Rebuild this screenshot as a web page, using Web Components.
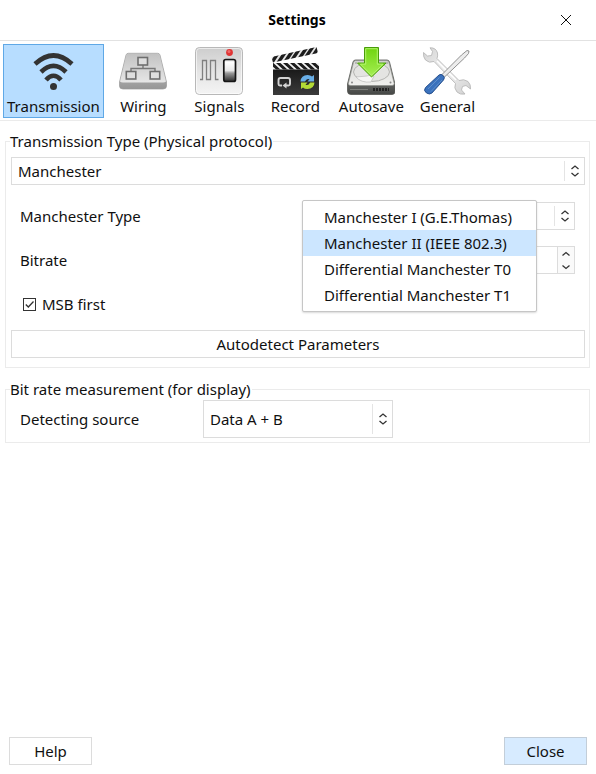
<!DOCTYPE html>
<html lang="en">
<head>
<meta charset="utf-8">
<title>Settings</title>
<style>
  body {
    margin: 0;
    background: #fff;
    color: #101010;
    font: 15px/22px "Noto Sans", "Open Sans", sans-serif;
  }
</style>
</head>
<body>
<settings-window></settings-window>

<script>
(function main() {
  const ICONS = {
    transmission: `
      <g fill="none" stroke="#333" stroke-width="4.600">
        <path d="M6 17Q24.500 0 43 17"/>
        <path d="M12 25Q24.500 12.500 37 25"/>
        <path d="M17 33Q24.500 24.500 32 33"/>
      </g>
      <circle cx="24.500" cy="39.500" r="3.500" fill="#333"/>`,
    wiring: `
      <defs>
        <linearGradient id="w1" x1="0" y1="0" x2="0" y2="1"><stop offset="0" stop-color="#c2c2c2"/><stop offset="1" stop-color="#e6e6e6"/></linearGradient>
        <linearGradient id="w2" x1="0" y1="0" x2="0" y2="1"><stop offset="0" stop-color="#d0d0d0"/><stop offset="1" stop-color="#969696"/></linearGradient>
      </defs>
      <path d="M0.500 35L7 8Q7.500 6.300 9.500 6.300H38.500Q40.500 6.300 41 8L47.500 35V39Q47.500 42 44 42H4Q0.500 42 0.500 39Z" fill="url(#w2)" stroke="#9a9a9a" stroke-width=".7"/>
      <path d="M1 34.500L7.400 8.300Q7.800 6.800 9.500 6.800H38.500Q40.200 6.800 40.600 8.300L47 34.500Q46 35.500 44 35.500H4Q2 35.500 1 34.500Z" fill="url(#w1)"/>
      <path d="M24 18V21.500M12 24.500V21.500H36V24.500" fill="none" stroke="#777" stroke-width="1.400"/>
      <g fill="#dedede" stroke="#6e6e6e" stroke-width="1.600">
        <rect x="19" y="10.500" width="9.500" height="7.500"/>
        <rect x="7.300" y="24.500" width="9.500" height="7.500"/>
        <rect x="31.200" y="24.500" width="9.500" height="7.500"/>
      </g>`,
    signals: `
      <defs>
        <linearGradient id="s1" x1="0" y1="0" x2="0" y2="1"><stop offset="0" stop-color="#cdcdcd"/><stop offset=".5" stop-color="#e4e4e4"/><stop offset="1" stop-color="#f4f4f4"/></linearGradient>
        <linearGradient id="s2" x1="0" y1="0" x2="0" y2="1"><stop offset="0" stop-color="#ccc"/><stop offset=".12" stop-color="#fff"/><stop offset=".5" stop-color="#e8e8e8"/><stop offset=".62" stop-color="#999"/><stop offset="1" stop-color="#2c2c2c"/></linearGradient>
      </defs>
      <rect x=".5" y=".5" width="47" height="47" rx="4" fill="url(#s1)" stroke="#b8b8b8"/>
      <rect x="1.500" y="1.500" width="45" height="45" rx="3" fill="none" stroke="#fff" stroke-opacity=".6"/>
      <path d="M5 32.500H7.500V13.500H11.500V32.500H15.500V13.500H20.500V32.500H23.500" fill="none" stroke="#808080" stroke-width="1.300"/>
      <rect x="28.800" y="12.500" width="11.700" height="22" rx="2" fill="url(#s2)" stroke="#151515" stroke-width="1.700"/>
      <circle cx="34.500" cy="5.500" r="3.400" fill="#e03434"/>
      <circle cx="34" cy="4.600" r="1.500" fill="#ef6a6a"/>`,
    record: `
      <defs>
        <linearGradient id="r1" x1="0" y1="0" x2="0" y2="1"><stop offset="0" stop-color="#111"/><stop offset="1" stop-color="#3b3b3b"/></linearGradient>
        <clipPath id="r2"><path d="M.5 10L45.500 0L47 6L2 15.500Z"/></clipPath>
        <clipPath id="r3"><rect x="2" y="16" width="46" height="6.500"/></clipPath>
      </defs>
      <path d="M.5 10L45.500 0L47 6L2 15.500Z" fill="#e4e4e4"/>
      <path clip-path="url(#r2)" d="M0 17L7 6M7 16L15 4M14 15L22 3M21 13L29 1M28 12L36 0M35 10L43 -2M42 9L49 -2" stroke="#1d1d1d" stroke-width="3.300"/>
      <rect x="2" y="16" width="46" height="32" fill="url(#r1)"/>
      <rect x="2" y="16" width="46" height="6.500" fill="#f2f2f2"/>
      <path clip-path="url(#r3)" d="M-1 15L9 24M6 15L16 24M13 15L23 24M20 15L30 24M27 15L37 24M34 15L44 24M41 15L51 24" stroke="#1d1d1d" stroke-width="3"/>
      <path d="M11 38.500H9Q7.500 38.500 7.500 37V33Q7.500 31 9.500 31H17Q19 31 19 33V37Q19 38.500 17.500 38.500H15" fill="none" stroke="#d4d4d4" stroke-width="1.900"/>
      <path d="M15.500 35.500V41.500L11.500 38.500Z" fill="#d4d4d4"/>
      <path d="M29.500 34.500Q30 28 36.500 28Q39.500 28 41 29.500L43 28V34.500H36.500L38.500 32.300Q35.500 31 34 34.500Z" fill="#69aee6"/>
      <path d="M43.500 35.500Q43 42 36.500 42Q33.500 42 32 40.500L30 42V35.500H36.500L34.500 37.700Q37.500 39 39 35.500Z" fill="#b3da35"/>`,
    autosave: `
      <defs>
        <linearGradient id="a1" x1="0" y1="0" x2="0" y2="1"><stop offset="0" stop-color="#d9d9d7"/><stop offset="1" stop-color="#f0f0ee"/></linearGradient>
        <linearGradient id="a2" x1="0" y1="0" x2="0" y2="1"><stop offset="0" stop-color="#a3a5a2"/><stop offset="1" stop-color="#454745"/></linearGradient>
        <linearGradient id="a3" x1="0" y1="0" x2="0" y2="1"><stop offset="0" stop-color="#6fd40e"/><stop offset="1" stop-color="#a6ef55"/></linearGradient>
      </defs>
      <path d="M.5 37L6 15Q6.500 13 8.500 13H40Q42 13 42.500 15L48 37V44Q48 47.500 45 47.500H4Q.5 47.500 .5 44Z" fill="url(#a2)" stroke="#555753" stroke-width=".8"/>
      <path d="M1.200 37L6.500 15.500Q7 13.700 8.500 13.700H40Q41.500 13.700 42 15.500L47.300 37Q46.500 38.500 45 38.500H4Q2 38.500 1.200 37Z" fill="url(#a1)" stroke="#888a85" stroke-width=".6"/>
      <ellipse cx="24.500" cy="25" rx="18" ry="9.500" fill="#e4e4e2" stroke="#b5b5b2"/>
      <path d="M9 30Q14 36 24 35L27 29Q24 27 20 29Z" fill="#f6f6f5" stroke="#bbb" stroke-width=".7"/>
      <g fill="#888"><circle cx="5" cy="35.500" r="1"/><circle cx="43.500" cy="35.500" r="1"/><circle cx="9" cy="16" r=".8"/><circle cx="40" cy="16" r=".8"/></g>
      <path d="M3 42.500H21" stroke="#7b7d7a"/>
      <path d="M26 42.500H42" stroke="#222" stroke-width="3" stroke-dasharray="2 1"/>
      <path d="M17.500 .5H31.500V16H39L24.500 30L10.500 16H17.500Z" fill="url(#a3)" stroke="#499c0a"/>
      <path d="M18.700 1.700H30.300V17.200H36L24.500 28.300L13.500 17.200H18.700Z" fill="none" stroke="#b6f574" stroke-width=".9"/>`,
    general: `
      <defs>
        <linearGradient id="g1" x1="0" y1="0" x2="1" y2="1"><stop offset="0" stop-color="#d4d4d4"/><stop offset=".5" stop-color="#f1f1f1"/><stop offset="1" stop-color="#d0d0d0"/></linearGradient>
      </defs>
      <path d="M7 .8Q13 .5 14.500 6Q15 9 14 11.500L36 33.500Q41 31.500 45 34.500Q48 37.500 47.500 42L43 38.500L39.500 39.500L38.500 43L42 47Q37 48 34 45Q30.500 41 32.500 36.500L11 14.500Q6 16.500 2.500 13Q0 10 .5 5.500L4.500 9L8.500 8.500L9.500 4.500Z" fill="url(#g1)" stroke="#b2b2b2" stroke-width=".8"/>
      <path d="M14 14L33 33" stroke="#fff" stroke-width="1.500"/>
      <path d="M44 3.500L46 4L45.500 6.500L41.500 11L21.500 30L19 27.500L38.500 8Z" fill="#ececec" stroke="#858585" stroke-width=".9"/>
      <path d="M16 28Q18 26.500 20 28.500Q22.500 30.500 20.500 33L9 46Q6.500 48 3.500 46Q0 43.500 2.500 40.500Z" fill="#3b72bd" stroke="#204a87" stroke-width=".9"/>
      <path d="M5 42L16.500 30.500M8 44.500L19 33" stroke="#5f8fca" stroke-width="1"/>`
  };

  const ARROWS = `
    <svg width="10" height="14" viewBox="0 0 10 14" aria-hidden="true">
      <path d="M1.500 5L5 2L8.500 5M1.500 9L5 12L8.500 9" fill="none" stroke="#333" stroke-width="1.300"/>
    </svg>`;

  const FIELD_STYLE = `
    :host { display: block; }
    * { box-sizing: border-box; }
    .row {
      display: grid;
      grid-template-columns: var(--columns, 1fr);
      column-gap: var(--column-gap, 0);
      align-items: center;
    }
    .field {
      display: grid;
      grid-template-columns: minmax(0, 1fr) auto;
      height: var(--field-height, 28px);
      border: 1px solid #dcdcdc;
      background: #fff;
    }
    select, input {
      min-width: 0;
      width: 100%;
      margin: 0;
      padding: 0 6px;
      border: 0;
      outline: 0;
      background: transparent;
      color: inherit;
      font: inherit;
      appearance: none;
    }
  `;

  class TitleBar extends HTMLElement {
    constructor() {
      super();
      this.attachShadow({ mode: "open" });
    }

    connectedCallback() {
      this.shadowRoot.innerHTML = `
        <style>
          :host {
            display: grid;
            grid-template-columns: 40px 1fr 40px;
            align-items: center;
            height: 40px;
            padding: 0 10px 0 8px;
            border-bottom: 1px solid #e2e2e2;
          }
          h1 {
            grid-column: 2;
            margin: 0;
            font-size: 14px;
            line-height: 22px;
            text-align: center;
            color: #000;
          }
          button {
            display: grid;
            place-items: center;
            height: 28px;
            padding: 0;
            border: 0;
            background: none;
          }
        </style>
        <h1><slot></slot></h1>
        <button type="button" aria-label="Close window">
          <svg width="12" height="12" viewBox="0 0 12 12"><path d="M1 1L11 11M11 1L1 11" stroke="#111"/></svg>
        </button>
      `;
    }
  }

  class ToolTab extends HTMLElement {
    constructor() {
      super();
      this.attachShadow({ mode: "open" });
    }

    connectedCallback() {
      const icon = ICONS[this.getAttribute("icon")];
      const pressed = this.hasAttribute("selected");
      this.shadowRoot.innerHTML = `
        <style>
          :host { display: block; }
          button {
            display: flex;
            flex-direction: column;
            align-items: center;
            min-width: 73px;
            padding: 2px 3px 0;
            border: 1px solid transparent;
            background: none;
            color: inherit;
            font: inherit;
          }
          button[aria-pressed="true"] {
            border-color: #5fa8e6;
            background: #b7ddff;
          }
        </style>
        <button type="button" aria-pressed="${pressed}">
          <svg width="48" height="48" viewBox="0 0 48 48" aria-hidden="true">${icon}</svg>
          <slot></slot>
        </button>
      `;
    }
  }

  class GroupBox extends HTMLElement {
    constructor() {
      super();
      this.attachShadow({ mode: "open" });
    }

    connectedCallback() {
      this.shadowRoot.innerHTML = `
        <style>
          :host { display: block; }
          fieldset {
            min-width: 0;
            margin: 0;
            padding: var(--group-padding, 0 4px 4px);
            border: 1px solid #ebebeb;
          }
          legend { padding: 0 1px 0 0; }
        </style>
        <fieldset>
          <legend>${this.getAttribute("legend")}</legend>
          <slot></slot>
        </fieldset>
      `;
    }
  }

  class ComboBox extends HTMLElement {
    constructor() {
      super();
      this.attachShadow({ mode: "open" });
    }

    connectedCallback() {
      const label = this.getAttribute("label");
      const name = this.getAttribute("name");
      const value = this.getAttribute("value");
      const options = this.getAttribute("options")
        .split("|")
        .map((text) => `<option${text === value ? " selected" : ""}>${text}</option>`)
        .join("");
      this.shadowRoot.innerHTML = `
        <style>
          ${FIELD_STYLE}
          .control { position: relative; }
          .side {
            display: grid;
            place-items: center;
            width: 20px;
            margin: 3px 0;
            border-left: 1px solid #e4e4e4;
            pointer-events: none;
          }
        </style>
        <div class="row">
          ${label ? `<label for="control">${label}</label>` : ""}
          <div class="control">
            <div class="field">
              <select id="control" ${label ? "" : `aria-label="${name}"`}>${options}</select>
              <span class="side">${ARROWS}</span>
            </div>
            <slot name="popup"></slot>
          </div>
        </div>
      `;
    }
  }

  class PopupList extends HTMLElement {
    constructor() {
      super();
      this.attachShadow({ mode: "open" });
    }

    connectedCallback() {
      const value = this.getAttribute("value");
      const items = this.getAttribute("options")
        .split("|")
        .map((text) => `<li role="option" aria-selected="${text === value}">${text}</li>`)
        .join("");
      // opens on top of the field it belongs to
      this.shadowRoot.innerHTML = `
        <style>
          :host {
            display: block;
            position: absolute;
            z-index: 10;
            top: -2px;
            left: 0;
          }
          ul {
            margin: 0;
            padding: 3px 0;
            border: 1px solid #c6c6c6;
            border-radius: 2px;
            background: #fff;
            box-shadow: 0 1px 2px rgba(0, 0, 0, .15);
            list-style: none;
          }
          li {
            padding: 0 24px 0 21px;
            line-height: 26px;
            white-space: nowrap;
          }
          li[aria-selected="true"] { background: #cce6ff; }
        </style>
        <ul role="listbox">${items}</ul>
      `;
    }
  }

  class SpinBox extends HTMLElement {
    constructor() {
      super();
      this.attachShadow({ mode: "open" });
    }

    connectedCallback() {
      this.shadowRoot.innerHTML = `
        <style>
          ${FIELD_STYLE}
          input::-webkit-inner-spin-button { appearance: none; }
          .side {
            display: grid;
            grid-template-rows: 1fr 1fr;
            width: 17px;
            border-left: 1px solid #dcdcdc;
          }
          button {
            display: grid;
            place-items: center;
            padding: 0;
            border: 0;
            background: #fafafa;
          }
          path { fill: none; stroke: #333; stroke-width: 1.3; }
        </style>
        <div class="row">
          <label for="control">${this.getAttribute("label")}</label>
          <div class="field">
            <input id="control" type="number">
            <span class="side">
              <button type="button" aria-label="Increase"><svg width="10" height="6" viewBox="0 0 10 6"><path d="M1.500 4.500L5 1.500L8.500 4.500"/></svg></button>
              <button type="button" aria-label="Decrease"><svg width="10" height="6" viewBox="0 0 10 6"><path d="M1.500 1.500L5 4.500L8.500 1.500"/></svg></button>
            </span>
          </div>
        </div>
      `;
    }
  }

  class CheckOption extends HTMLElement {
    constructor() {
      super();
      this.attachShadow({ mode: "open" });
    }

    connectedCallback() {
      this.shadowRoot.innerHTML = `
        <style>
          :host { display: block; }
          label {
            display: flex;
            align-items: center;
            gap: 6px;
            height: 28px;
            padding-left: 3px;
          }
          .box { display: grid; }
          .box > * { grid-area: 1 / 1; }
          input {
            appearance: none;
            width: 13px;
            height: 13px;
            margin: 0;
            border: 1px solid #333;
            background: #fff;
          }
          svg { visibility: hidden; pointer-events: none; }
          input:checked + svg { visibility: visible; }
        </style>
        <label>
          <span class="box">
            <input type="checkbox" ${this.hasAttribute("checked") ? "checked" : ""}>
            <svg width="13" height="13" viewBox="0 0 13 13"><path d="M2.800 6.500L5.300 9L10.500 3.500" fill="none" stroke="#333" stroke-width="1.300"/></svg>
          </span>
          <slot></slot>
        </label>
      `;
    }
  }

  class PushButton extends HTMLElement {
    constructor() {
      super();
      this.attachShadow({ mode: "open" });
    }

    connectedCallback() {
      this.shadowRoot.innerHTML = `
        <style>
          :host { display: block; }
          button {
            width: 100%;
            min-width: 83px;
            height: 28px;
            padding: 0 6px;
            border: 1px solid #dcdcdc;
            background: #fff;
            color: inherit;
            font: inherit;
            line-height: 22px;
          }
          :host([primary]) button {
            border-color: #c3ced9;
            background: #d7ebff;
          }
        </style>
        <button type="button"><slot></slot></button>
      `;
    }
  }

  class SettingsWindow extends HTMLElement {
    constructor() {
      super();
      this.attachShadow({ mode: "open" });
    }

    connectedCallback() {
      const types = "Manchester I (G.E.Thomas)|Manchester II (IEEE 802.3)|Differential Manchester T0|Differential Manchester T1";
      this.shadowRoot.innerHTML = `
        <style>
          :host {
            display: flex;
            flex-direction: column;
            min-height: 100vh;
          }
          nav {
            display: flex;
            gap: 3px;
            padding: 3px 3px 2px;
            border-bottom: 1px solid #ebebeb;
          }
          main {
            display: flex;
            flex-direction: column;
            gap: 10px;
            padding: 9px 6px 0 5px;
          }
          .physical { --group-padding: 5px 4px 9px; }
          .physical > * { margin-left: 1px; }
          .physical .rows {
            display: flex;
            flex-direction: column;
            gap: 16px;
            margin: 17px 10px 12px;
            --columns: 1fr 1fr;
            --column-gap: 9px;
          }
          .source {
            margin-left: 10px;
            --columns: 183px 190px;
            --field-height: 38px;
          }
          footer {
            display: flex;
            justify-content: space-between;
            margin-top: auto;
            padding: 9px;
          }
        </style>
        <title-bar>Settings</title-bar>
        <nav>
          <tool-tab icon="transmission" selected>Transmission</tool-tab>
          <tool-tab icon="wiring">Wiring</tool-tab>
          <tool-tab icon="signals">Signals</tool-tab>
          <tool-tab icon="record">Record</tool-tab>
          <tool-tab icon="autosave">Autosave</tool-tab>
          <tool-tab icon="general">General</tool-tab>
        </nav>
        <main>
          <group-box class="physical" legend="Transmission Type (Physical protocol)">
            <combo-box name="Transmission type" options="Manchester" value="Manchester"></combo-box>
            <div class="rows">
              <combo-box label="Manchester Type" options="${types}" value="Manchester II (IEEE 802.3)">
                <popup-list slot="popup" options="${types}" value="Manchester II (IEEE 802.3)"></popup-list>
              </combo-box>
              <spin-box label="Bitrate"></spin-box>
              <check-option checked>MSB first</check-option>
            </div>
            <push-button>Autodetect Parameters</push-button>
          </group-box>
          <group-box legend="Bit rate measurement (for display)">
            <combo-box class="source" label="Detecting source" options="Data A + B" value="Data A + B"></combo-box>
          </group-box>
        </main>
        <footer>
          <push-button>Help</push-button>
          <push-button primary>Close</push-button>
        </footer>
      `;
    }
  }

  customElements.define("title-bar", TitleBar);
  customElements.define("tool-tab", ToolTab);
  customElements.define("group-box", GroupBox);
  customElements.define("combo-box", ComboBox);
  customElements.define("popup-list", PopupList);
  customElements.define("spin-box", SpinBox);
  customElements.define("check-option", CheckOption);
  customElements.define("push-button", PushButton);
  customElements.define("settings-window", SettingsWindow);
})();
</script>
</body>
</html>
